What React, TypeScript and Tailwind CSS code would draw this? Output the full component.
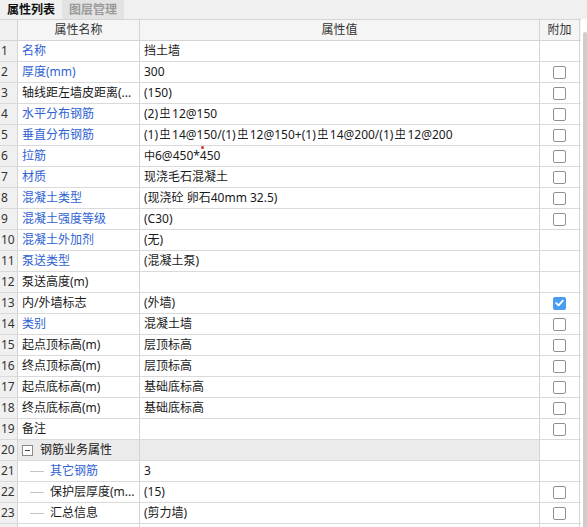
import React from "react";

type Row = {
  n: number | "";
  name: string;
  value: React.ReactNode;
  blue?: boolean;
  cb?: "none" | "off" | "on";
  group?: boolean;
  child?: boolean;
};

const Hrb = () => (
  <span className="inline-block text-[10px] leading-[10px] border-b border-[#222] mx-[2px] relative -top-[2px]">中</span>
);

const rows: Row[] = [
  { n: 1, name: "名称", value: "挡土墙", blue: true, cb: "none" },
  { n: 2, name: "厚度(mm)", value: "300", blue: true, cb: "off" },
  { n: 3, name: "轴线距左墙皮距离(...", value: "(150)", cb: "off" },
  { n: 4, name: "水平分布钢筋", value: (<>(2)<Hrb />12@150</>), blue: true, cb: "off" },
  {
    n: 5,
    name: "垂直分布钢筋",
    value: (<>(1)<Hrb />14@150/(1)<Hrb />12@150+(1)<Hrb />14@200/(1)<Hrb />12@200</>),
    blue: true,
    cb: "off",
  },
  {
    n: 6,
    name: "拉筋",
    value: (
      <>
        <span className="text-[11px]">中</span>6@450*<span className="relative">4<span className="absolute left-[1px] -top-[1px] w-[3px] h-[3px] rounded-full bg-[#e0302a]" /></span>50
      </>
    ),
    blue: true,
    cb: "off",
  },
  { n: 7, name: "材质", value: "现浇毛石混凝土", blue: true, cb: "off" },
  { n: 8, name: "混凝土类型", value: "(现浇砼 卵石40mm 32.5)", blue: true, cb: "off" },
  { n: 9, name: "混凝土强度等级", value: "(C30)", blue: true, cb: "off" },
  { n: 10, name: "混凝土外加剂", value: "(无)", blue: true, cb: "none" },
  { n: 11, name: "泵送类型", value: "(混凝土泵)", blue: true, cb: "none" },
  { n: 12, name: "泵送高度(m)", value: "", cb: "none" },
  { n: 13, name: "内/外墙标志", value: "(外墙)", cb: "on" },
  { n: 14, name: "类别", value: "混凝土墙", blue: true, cb: "off" },
  { n: 15, name: "起点顶标高(m)", value: "层顶标高", cb: "off" },
  { n: 16, name: "终点顶标高(m)", value: "层顶标高", cb: "off" },
  { n: 17, name: "起点底标高(m)", value: "基础底标高", cb: "off" },
  { n: 18, name: "终点底标高(m)", value: "基础底标高", cb: "off" },
  { n: 19, name: "备注", value: "", cb: "off" },
  { n: 20, name: "钢筋业务属性", value: "", cb: "none", group: true },
  { n: 21, name: "其它钢筋", value: "3", blue: true, cb: "none", child: true },
  { n: 22, name: "保护层厚度(m...", value: "(15)", cb: "off", child: true },
  { n: 23, name: "汇总信息", value: "(剪力墙)", cb: "off", child: true },
  { n: "", name: "", value: "", cb: "none" },
];

function CheckBox({ state }: { state: "none" | "off" | "on" }) {
  if (state === "none") return null;
  if (state === "on")
    return (
      <div className="w-[13px] h-[13px] rounded-[2px] bg-[#4a9cf0] flex items-center justify-center">
        <svg width="9" height="8" viewBox="0 0 9 8">
          <path d="M1.2 4.2 L3.6 6.4 L7.8 1.6" stroke="#fff" strokeWidth="1.8" fill="none" strokeLinecap="round" strokeLinejoin="round" />
        </svg>
      </div>
    );
  return <div className="w-[13px] h-[13px] rounded-[2px] border border-[#909090] bg-white" />;
}

export default function App() {
  return (
    <div
      className="w-[587px] h-[527px] overflow-hidden bg-white text-[12px] text-[#1a1a1a] relative"
      style={{ fontFamily: '"Noto Sans", "Noto Sans CJK SC", sans-serif' }}
    >
      {/* tabs */}
      <div className="h-[19px] flex bg-[#f0f0f0]">
        <div className="w-[62px] flex items-center justify-center bg-[#f0f0f0] text-[#111] font-bold text-[12px] leading-none">
          属性列表
        </div>
        <div className="w-[62px] flex items-center justify-center bg-[#e3e3e3] text-[#9a9a9a] font-bold text-[12px] leading-none">
          图层管理
        </div>
        <div className="flex-1" />
      </div>

      <div className="flex">
        <div className="w-[581px] border-t border-[#d4d4d4]">
          {/* header */}
          <div className="grid grid-cols-[18px_122px_400px_40px] h-[21px] border-b border-[#d4d4d4] bg-[#f5f5f5] text-[#333]">
            <div className="border-r border-[#d4d4d4] bg-[#f0f0f0]" />
            <div className="border-r border-[#d4d4d4] flex items-center justify-center">属性名称</div>
            <div className="border-r border-[#d4d4d4] flex items-center justify-center">属性值</div>
            <div className="border-r border-[#d4d4d4] flex items-center justify-center">附加</div>
          </div>
          {rows.map((r, i) => (
            <div
              key={i}
              className="grid grid-cols-[18px_122px_400px_40px] h-[21px] border-b border-[#dadada]"
            >
              <div className="border-r border-[#d4d4d4] bg-[#f0f0f0] flex items-center pl-[1px] text-[#333] whitespace-nowrap overflow-hidden">
                {r.n}
              </div>
              <div
                className={
                  "border-r border-[#d4d4d4] flex items-center overflow-hidden whitespace-nowrap " +
                  (r.group ? "bg-[#ebebeb] " : "") +
                  (r.blue ? "text-[#2f62d2]" : "text-[#1a1a1a]")
                }
              >
                {r.group ? (
                  <>
                    <div className="ml-[4px] w-[11px] h-[11px] border border-[#8a8a8a] bg-white flex items-center justify-center">
                      <div className="w-[5px] h-[1px] bg-[#444]" />
                    </div>
                    <span className="ml-[7px]">{r.name}</span>
                  </>
                ) : r.child ? (
                  <>
                    <div className="ml-[12px] w-[14px] h-[1px] bg-[#c4c4c4]" />
                    <span className="ml-[6px]">{r.name}</span>
                  </>
                ) : (
                  <span className="pl-[4px]">{r.name}</span>
                )}
              </div>
              <div
                className={
                  "border-r border-[#d4d4d4] flex items-center pl-[4px] whitespace-nowrap overflow-hidden " +
                  (r.group ? "bg-[#ebebeb]" : "")
                }
              >
                {r.value}
              </div>
              <div className="border-r border-[#d4d4d4] flex items-center justify-center">
                <CheckBox state={r.cb ?? "none"} />
              </div>
            </div>
          ))}
        </div>
        <div className="w-[6px] pl-[2px] pt-[13px]">
          <div className="w-[4px] h-[500px] rounded-t-[2px] bg-[#cdcdcd]" />
        </div>
      </div>
    </div>
  );
}
